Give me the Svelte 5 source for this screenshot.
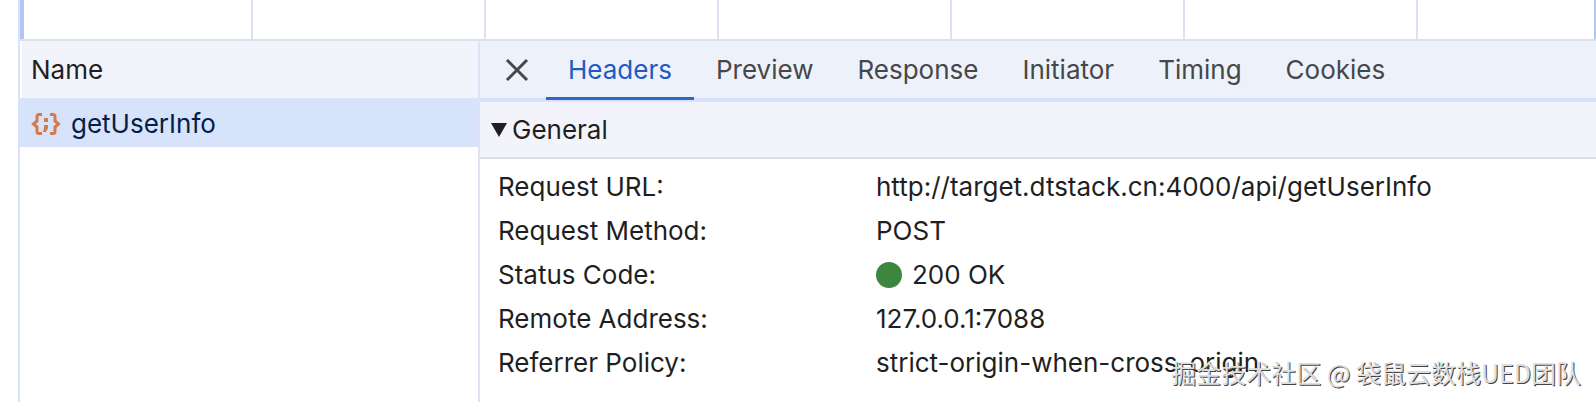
<script lang="ts">
	type Tab = {
		id: string;
		label: string;
	};

	type Field = {
		label: string;
		value: string;
		status?: boolean;
	};

	const tabs: Tab[] = [
		{ id: 'headers', label: 'Headers' },
		{ id: 'preview', label: 'Preview' },
		{ id: 'response', label: 'Response' },
		{ id: 'initiator', label: 'Initiator' },
		{ id: 'timing', label: 'Timing' },
		{ id: 'cookies', label: 'Cookies' }
	];

	const general: Field[] = [
		{ label: 'Request URL:', value: 'http://target.dtstack.cn:4000/api/getUserInfo' },
		{ label: 'Request Method:', value: 'POST' },
		{ label: 'Status Code:', value: '200 OK', status: true },
		{ label: 'Remote Address:', value: '127.0.0.1:7088' },
		{ label: 'Referrer Policy:', value: 'strict-origin-when-cross-origin' }
	];

	const requests = ['getUserInfo'];

	let activeTab = $state('headers');
	let selected = $state('getUserInfo');
</script>

<div class="network">
	<div class="timeline">
		{#each Array(7) as _}
			<span class="tick"></span>
		{/each}
	</div>

	<div class="panes">
		<table class="requests">
			<thead>
				<tr><th scope="col">Name</th></tr>
			</thead>
			<tbody>
				{#each requests as request}
					<tr class:selected={request === selected}>
						<td>
							<button class="request" onclick={() => (selected = request)}>
								<svg class="braces" viewBox="0 0 30 24" aria-hidden="true">
									<path d="M11 2.5H8Q6 2.5 6 4.500V9L2.500 12L6 15V19.500Q6 21.500 8 21.500H11" />
									<path d="M19 2.500H22Q24 2.500 24 4.500V9L27.500 12L24 15V19.500Q24 21.500 22 21.500H19" />
									<path class="solid" d="M13 6H17V10H13ZM13 13H17V16L15 20H12L13 16Z" />
								</svg>
								{request}
							</button>
						</td>
					</tr>
				{/each}
			</tbody>
		</table>

		<section class="detail">
			<div class="toolbar">
				<button class="close" aria-label="Close">
					<svg viewBox="0 0 24 24" aria-hidden="true">
						<path d="M2 2L22 22M22 2L2 22" />
					</svg>
				</button>
				<div class="tabs" role="tablist">
					{#each tabs as tab}
						<button
							class="tab"
							class:active={tab.id === activeTab}
							role="tab"
							aria-selected={tab.id === activeTab}
							onclick={() => (activeTab = tab.id)}
						>
							{tab.label}
						</button>
					{/each}
				</div>
			</div>

			<details open>
				<summary>
					<svg class="arrow" viewBox="0 0 16 14" aria-hidden="true">
						<path d="M0 0H16L8 14Z" />
					</svg>
					General
				</summary>
				<dl>
					{#each general as field}
						<div class="field">
							<dt>{field.label}</dt>
							<dd>
								{#if field.status}<span class="dot"></span>{/if}
								{field.value}
							</dd>
						</div>
					{/each}
				</dl>
			</details>
		</section>
	</div>

	<div class="watermark">掘金技术社区 @ 袋鼠云数栈UED团队</div>
</div>

<style>
	:global(body) {
		margin: 0;
		background: #fff;
	}

	.network {
		position: relative;
		display: flex;
		flex-direction: column;
		box-sizing: border-box;
		min-height: 100vh;
		margin-left: 18px;
		border-left: 2px solid #d6e3fb;
		overflow: hidden;
		font-family: Inter, 'Liberation Sans', sans-serif;
		font-size: 26px;
		line-height: 32px;
		color: #1f1f1f;
	}

	button {
		margin: 0;
		padding: 0;
		border: 0;
		background: none;
		font: inherit;
		color: inherit;
		cursor: pointer;
	}

	.timeline {
		display: flex;
		height: 39px;
		border-bottom: 2px solid #dbe0ee;
	}

	.tick {
		flex: 0 0 233px;
		box-sizing: border-box;
		border-right: 2px solid #dedff2;
	}

	.tick:first-child {
		border-left: 4px solid #b3c6f3;
	}

	.tick:last-child {
		flex: 1;
		border-right-color: #b3c6f3;
	}

	.panes {
		display: flex;
		flex: 1;
	}

	.requests {
		flex: 0 0 458px;
		align-self: flex-start;
		display: block;
		border-spacing: 0;
	}

	.requests thead,
	.requests tbody,
	.requests tr,
	.requests th,
	.requests td {
		display: block;
		padding: 0;
	}

	.requests th {
		margin-left: 2px;
		padding: 13px 9px 12px;
		background: #f2f3fb;
		font-weight: 400;
		text-align: left;
	}

	.request {
		display: flex;
		align-items: center;
		gap: 10px;
		width: 100%;
		padding: 10px 11px 7px;
		text-align: left;
	}

	.selected {
		background: #d6e3fb;
		color: #041e49;
	}

	.braces {
		width: 30px;
		height: 24px;
		fill: none;
		stroke: #d67a48;
		stroke-width: 3;
	}

	.braces .solid {
		fill: #d67a48;
		stroke: none;
	}

	.detail {
		flex: 1;
		min-width: 0;
		border-left: 2px solid #dfe2f5;
	}

	.toolbar {
		display: flex;
		align-items: stretch;
		background: #edf1fa;
		border-bottom: 4px solid #d6e3fb;
	}

	.close {
		width: 66px;
		padding-left: 8px;
	}

	.close svg {
		display: block;
		width: 24px;
		height: 24px;
		margin: 0 auto;
		fill: none;
		stroke: #45474a;
		stroke-width: 3;
	}

	.tabs {
		display: flex;
	}

	.tab {
		padding: 13px 22px 12px;
		color: #45474a;
	}

	/* the underline runs over the toolbar's own border */
	.tab.active {
		margin-bottom: -2px;
		padding-bottom: 11px;
		border-bottom: 3px solid #2f66cc;
		color: #1f5bc4;
	}

	summary {
		display: flex;
		align-items: center;
		gap: 5px;
		padding: 12px 11px 11px;
		background: #f2f3fb;
		border-bottom: 2px solid #dbdfe8;
		list-style: none;
		cursor: pointer;
	}

	.arrow {
		width: 16px;
		height: 14px;
		fill: #1f1f1f;
	}

	dl {
		margin: 0;
		padding: 6px 18px;
	}

	.field {
		display: flex;
		line-height: 44px;
	}

	dt {
		flex: 0 0 378px;
	}

	dd {
		display: flex;
		align-items: center;
		gap: 10px;
		margin: 0;
	}

	.dot {
		width: 26px;
		height: 26px;
		border-radius: 50%;
		background: #3d8640;
	}

	.watermark {
		position: absolute;
		right: 15px;
		bottom: 14px;
		font-family: 'Noto Sans CJK SC', sans-serif;
		font-size: 25px;
		color: #dedede;
		text-shadow: 1px 1px 0 #444;
		pointer-events: none;
	}
</style>
